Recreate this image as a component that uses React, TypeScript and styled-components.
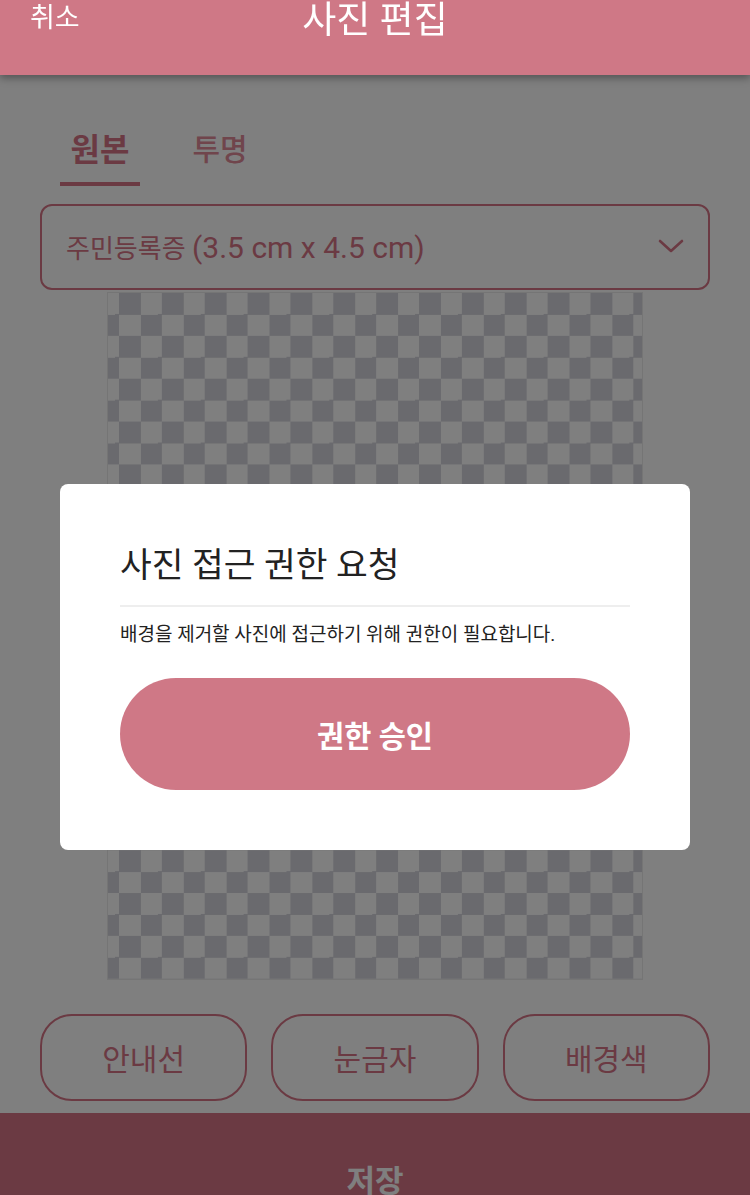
import React, { useState } from 'react';
import styled, { createGlobalStyle } from 'styled-components';

const brand = '#d67586';
const headerPink = '#cf7886';
const sans = `Roboto, "Noto Sans CJK KR", "Noto Sans", sans-serif`;

const GlobalStyle = createGlobalStyle`
  html, body {
    margin: 0;
    padding: 0;
    background: #fff;
    font-family: ${sans};
    overflow: hidden;
  }
  * {
    box-sizing: border-box;
  }
`;

const Page = styled.div`
  width: 750px;
  height: 1195px;
  display: flex;
  flex-direction: column;
  overflow: hidden;
`;

const Header = styled.header`
  position: relative;
  z-index: 20;
  height: 75px;
  flex-shrink: 0;
  background: ${headerPink};
  box-shadow: 0 3px 8px rgba(0, 0, 0, 0.35);
  display: grid;
  grid-template-columns: 1fr auto 1fr;
  align-items: start;
  padding: 0 30px;
  color: #fff;
`;

const Cancel = styled.span`
  font-size: 27px;
  line-height: 36px;
`;

const Title = styled.h1`
  margin: 0;
  padding-top: 1px;
  font-size: 37px;
  font-weight: 400;
  line-height: 40px;
`;

const Tabs = styled.nav`
  display: flex;
  gap: 40px;
  padding: 55px 0 0 60px;
`;

const Tab = styled.button<{ $active?: boolean }>`
  width: 80px;
  padding: 0 0 12px;
  border: 0;
  border-bottom: 4px solid ${(p) => (p.$active ? brand : 'transparent')};
  background: none;
  font-family: ${sans};
  font-size: ${(p) => (p.$active ? 32 : 30)}px;
  line-height: 40px;
  font-weight: ${(p) => (p.$active ? 700 : 500)};
  color: ${(p) => (p.$active ? brand : '#e08a99')};
  text-align: center;
  white-space: nowrap;
`;

const Body = styled.main`
  display: flex;
  flex-direction: column;
  padding: 18px 40px 0;
`;

const Select = styled.div`
  height: 86px;
  border: 2px solid ${brand};
  border-radius: 12px;
  display: flex;
  align-items: center;
  justify-content: space-between;
  padding: 0 24px 2px 24px;
  color: ${brand};
  font-size: 26px;
`;

const Size = styled.span`
  font-size: 30px;
`;

const Frame = styled.div`
  align-self: center;
  margin-top: 2px;
  width: 536px;
  height: 688px;
  border: 1px solid #eaeaea;
  background: conic-gradient(#fff 25%, #d5d5dc 0 50%, #fff 0 75%, #d5d5dc 0);
  background-size: 42.86px 42.86px;
  background-position: 11px 0;
`;

const Tools = styled.div`
  display: grid;
  grid-template-columns: repeat(3, 1fr);
  gap: 24px;
  margin-top: 34px;
`;

const ToolButton = styled.button`
  height: 87px;
  padding-bottom: 3px;
  border: 2px solid ${brand};
  border-radius: 32px;
  background: none;
  color: ${brand};
  font-family: ${sans};
  font-size: 30px;
  font-weight: 400;
`;

const SaveBar = styled.footer`
  margin-top: 12px;
  height: 140px;
  flex-shrink: 0;
  background: ${brand};
  display: flex;
  justify-content: center;
  padding-top: 49px;
  color: #fff;
  font-size: 31px;
  font-weight: 700;
  line-height: 40px;
`;

const Overlay = styled.div`
  position: fixed;
  inset: 0;
  z-index: 10;
  background: rgba(0, 0, 0, 0.5);
  display: flex;
  justify-content: center;
  align-items: flex-start;
  padding-top: 484px;
`;

const Dialog = styled.div`
  width: 630px;
  background: #fff;
  border-radius: 8px;
  padding: 61px 60px 60px;
  display: flex;
  flex-direction: column;
`;

const DialogTitle = styled.h2`
  margin: 0;
  font-size: 34.5px;
  font-weight: 400;
  line-height: 40px;
  color: #222;
`;

const Divider = styled.hr`
  margin: 20px 0 0;
  border: 0;
  height: 2px;
  background: #eeeeee;
`;

const DialogText = styled.p`
  margin: 15px 0 0;
  font-size: 19px;
  line-height: 26px;
  color: #222;
`;

const Confirm = styled.button`
  margin-top: 30px;
  height: 112px;
  border: 0;
  border-radius: 56px;
  background: ${headerPink};
  color: #fff;
  font-family: ${sans};
  font-size: 29.5px;
  font-weight: 700;
`;

function Chevron() {
  return (
    <svg width="26" height="16" viewBox="0 0 26 16" fill="none">
      <path d="M2 3l11 10L24 3" stroke={brand} strokeWidth="2.6" strokeLinecap="round" strokeLinejoin="round" />
    </svg>
  );
}

export default function App() {
  const [tab, setTab] = useState('original');
  const tools = ['안내선', '눈금자', '배경색'];

  return (
    <Page>
      <GlobalStyle />
      <Header>
        <Cancel>취소</Cancel>
        <Title>사진 편집</Title>
        <span />
      </Header>

      <Tabs>
        <Tab $active={tab === 'original'} onClick={() => setTab('original')}>
          원본
        </Tab>
        <Tab $active={tab === 'clear'} onClick={() => setTab('clear')}>
          투명
        </Tab>
      </Tabs>

      <Body>
        <Select>
          <span>
            주민등록증 <Size>(3.5 cm x 4.5 cm)</Size>
          </span>
          <Chevron />
        </Select>
        <Frame />
        <Tools>
          {tools.map((t) => (
            <ToolButton key={t}>{t}</ToolButton>
          ))}
        </Tools>
      </Body>

      <SaveBar>저장</SaveBar>

      <Overlay>
        <Dialog>
          <DialogTitle>사진 접근 권한 요청</DialogTitle>
          <Divider />
          <DialogText>배경을 제거할 사진에 접근하기 위해 권한이 필요합니다.</DialogText>
          <Confirm>권한 승인</Confirm>
        </Dialog>
      </Overlay>
    </Page>
  );
}
